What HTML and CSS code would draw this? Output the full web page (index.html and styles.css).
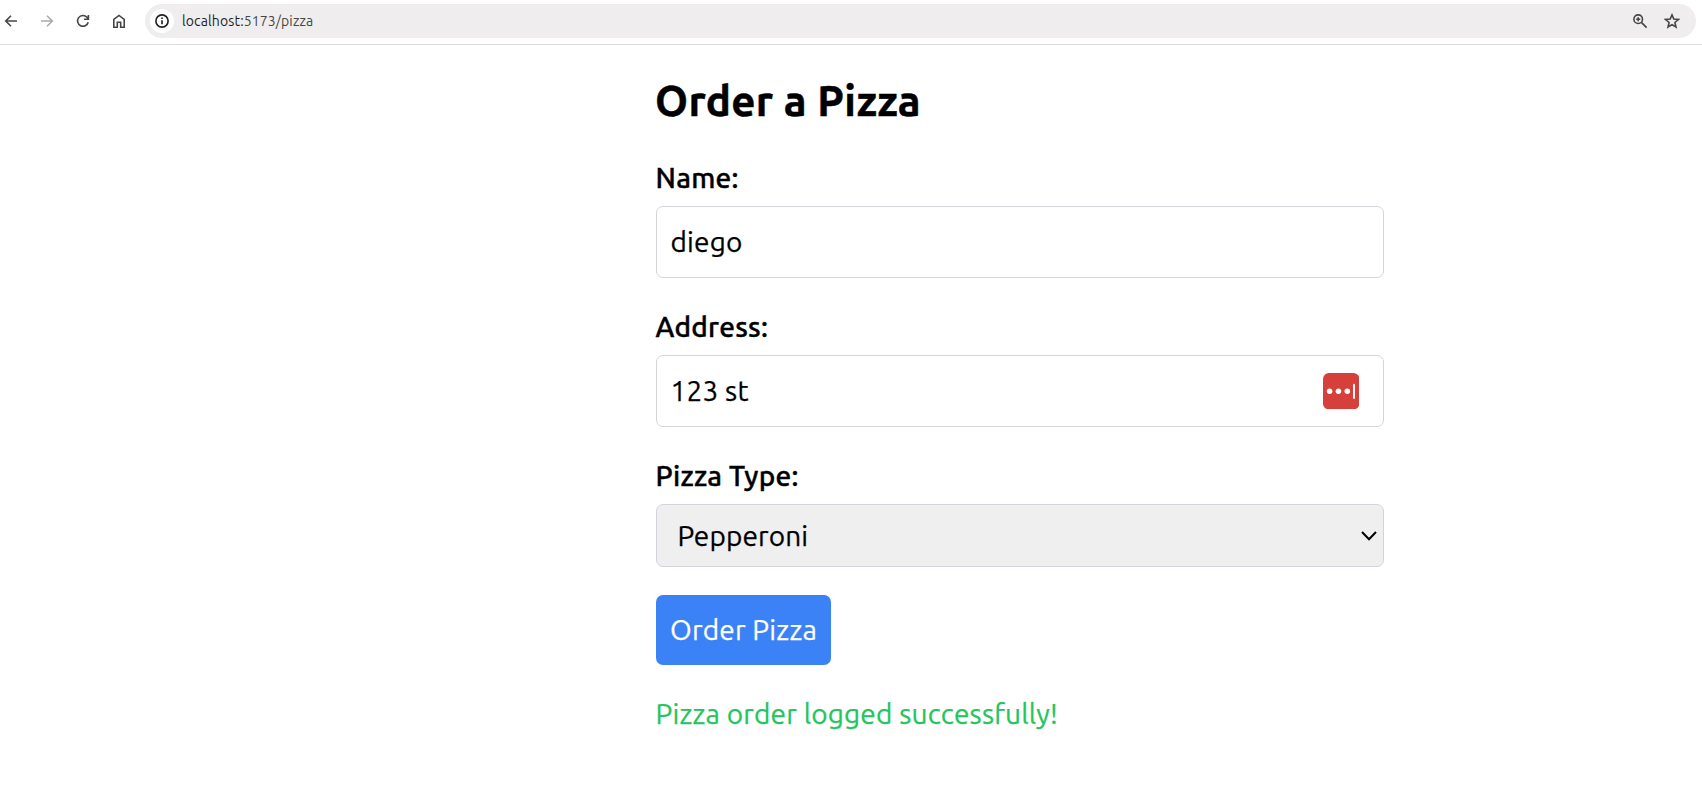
FILE: index.html
```html
<!DOCTYPE html>
<html lang="en">
<head>
<meta charset="utf-8">
<title>Order a Pizza</title>
<link rel="stylesheet" href="styles.css">
</head>
<body>
<header class="toolbar">
  <nav class="nav">
    <svg class="icon" viewBox="0 0 16 16"><path d="M14 8H3M8 2.7 2.7 8 8 13.3"/></svg>
    <svg class="icon disabled" viewBox="0 0 16 16"><path d="M2 8h11M8 2.7 13.3 8 8 13.3"/></svg>
    <svg class="icon" viewBox="0 0 16 16"><path d="M13.2 9.2A5.4 5.4 0 1 1 12 4.3L13.3 5.8M13.4 1.9v4.3H9"/></svg>
    <svg class="icon" viewBox="0 0 16 16"><path d="M2.8 6.4 8 2.4l5.2 4v7.8H9.7V9.3H6.3v4.9H2.8z"/></svg>
  </nav>
  <div class="omnibox">
    <span class="info"><svg class="icon" viewBox="0 0 16 16"><circle cx="8" cy="8" r="6.1"/><path d="M8 7.2v4M8 4.5v1.5"/></svg></span>
    <span class="url"><span class="host">localhost:</span><span class="path">5173/pizza</span></span>
    <svg class="icon zoom" viewBox="0 0 16 16"><circle cx="6.2" cy="6.2" r="4.3"/><path d="M9.4 9.4 14.6 14.6M6.2 4.2v4M4.2 6.2h4"/></svg>
    <svg class="icon star" viewBox="0 0 16 16"><path d="m8 1.9 1.8 4.2 4.6.4-3.5 3 1.1 4.5L8 11.6 4 14l1.1-4.5-3.5-3 4.6-.4z"/></svg>
  </div>
</header>
<main class="page">
  <h1 class="title">Order a Pizza</h1>
  <form class="form">
    <label class="label" for="name">Name:</label>
    <div class="field"><input class="input" id="name" value="diego"></div>
    <label class="label" for="address">Address:</label>
    <div class="field">
      <input class="input" id="address" value="123 st">
      <svg class="manager" viewBox="0 0 37 37"><rect width="37" height="37" rx="6" fill="#d7403a"/><g fill="#fff"><circle cx="6.7" cy="18.5" r="2.8"/><circle cx="15.7" cy="18.5" r="2.8"/><circle cx="24.7" cy="18.5" r="2.8"/><rect x="30.5" y="11" width="2" height="15.5" rx="1"/></g></svg>
    </div>
    <label class="label">Pizza Type:</label>
    <div class="select"><span class="choice">Pepperoni</span><svg class="chevron" viewBox="0 0 16 10"><path d="m1 1 7 7.2L15 1"/></svg></div>
    <button class="button" type="button">Order Pizza</button>
  </form>
  <p class="message">Pizza order logged successfully!</p>
</main>
</body>
</html>
```
FILE: styles.css
```css
* { box-sizing: border-box; }
body { margin: 0; height: 792px; overflow: hidden; background: #fff; color: #000; font-family: Ubuntu, "Noto Sans", sans-serif; }
.toolbar { display: flex; align-items: flex-start; height: 45px; padding: 4px 6px 0 3px; border-bottom: 1px solid #dedede; }
.nav { display: flex; gap: 20px; width: 142px; height: 34px; align-items: center; }
.icon { width: 16px; height: 16px; flex: none; fill: none; stroke: #454746; stroke-width: 1.6; }
.disabled { stroke: #aaa; }
.omnibox { display: flex; align-items: center; flex: 1; height: 34px; padding: 0 16px 0 5px; border-radius: 17px; background: #efedee; }
.info { display: flex; align-items: center; justify-content: center; width: 24px; height: 24px; border-radius: 50%; background: #fff; }
.info .icon { stroke: #1f1f1f; }
.url { margin-left: 8px; flex: 1; font-size: 14px; line-height: 20px; letter-spacing: 0.13px; }
.host { color: #1f1f1f; }
.path { color: #474747; }
.zoom { margin-right: 16px; }
.page { width: 728px; margin-left: 656px; padding-top: 28px; -webkit-text-stroke-width: 0.25px; }
.title { margin: 0 0 28px -1px; font-size: 42px; line-height: 56px; font-weight: 700; letter-spacing: 0.38px; -webkit-text-stroke-width: 0.5px; }
.form { display: flex; flex-direction: column; align-items: flex-start; }
.label { height: 42px; margin: 0 0 7px -0.5px; font-size: 28px; line-height: 42px; font-weight: 550; letter-spacing: 0.25px; -webkit-text-stroke-width: 0.4px; }
.field { position: relative; width: 728px; height: 72px; margin-bottom: 28px; }
.input { width: 100%; height: 72px; padding: 0 14px 2px 13.5px; border: 1px solid #d1d5db; border-radius: 7px; background: #fff; font: 400 28px Ubuntu, "Noto Sans", sans-serif; letter-spacing: 0.2px; color: #000; }
.manager { position: absolute; right: 24.6px; top: 18px; width: 36.4px; height: 36.4px; }
.select { display: flex; align-items: center; justify-content: space-between; width: 728px; height: 63px; padding: 0 6px 0 20.5px; border: 1px solid #d1d5db; border-radius: 7px; background: #efefef; font-size: 28px; letter-spacing: 0.12px; }
.chevron { width: 16px; height: 10px; fill: none; stroke: #000; stroke-width: 2; }
.button { width: 175px; height: 70px; margin-top: 28px; padding: 0 0 2px; border: 0; border-radius: 7px; background: #3b82f6; color: #fff; font: 400 28px Ubuntu, "Noto Sans", sans-serif; letter-spacing: 0.2px; white-space: nowrap; }
.message { margin: 28px 0 0 -0.5px; font-size: 28px; line-height: 42px; letter-spacing: 0.19px; color: #22c55e; white-space: nowrap; }
```
